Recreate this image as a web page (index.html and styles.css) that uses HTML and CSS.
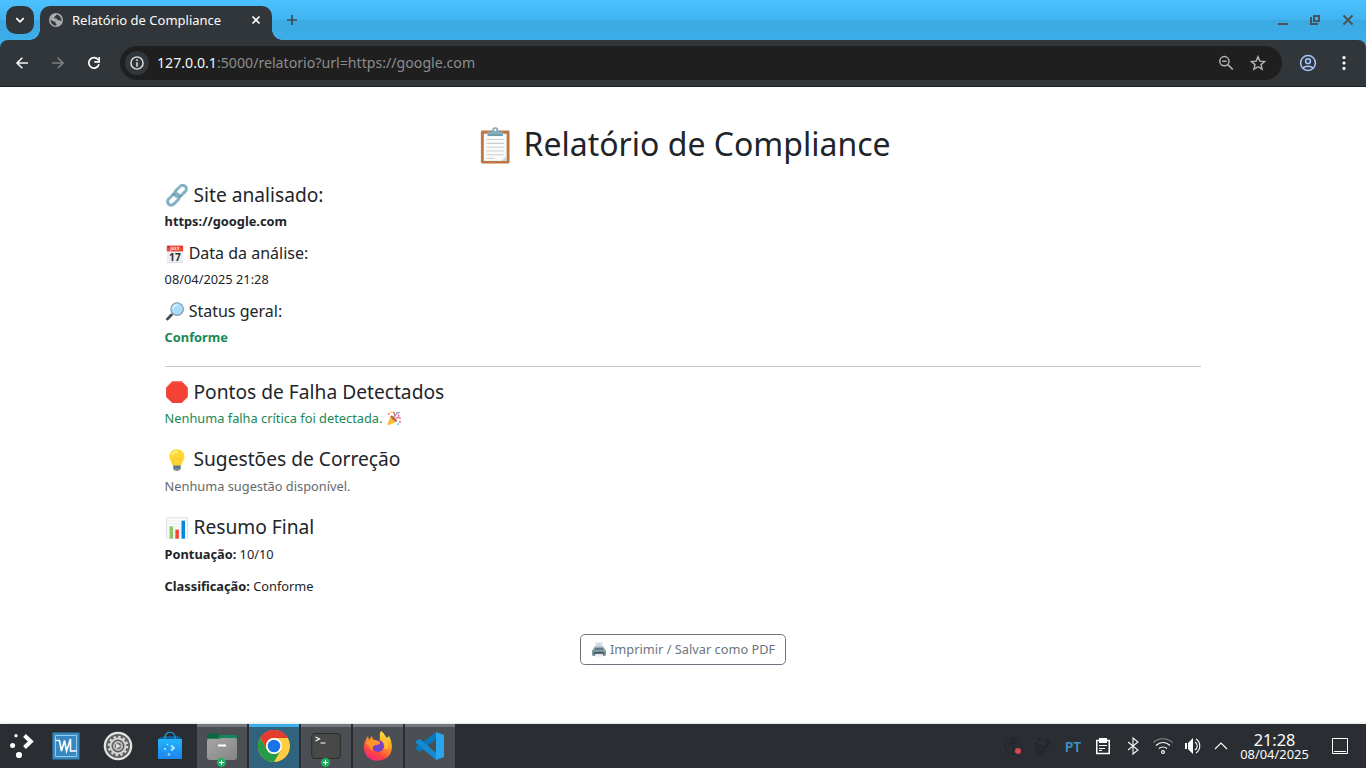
FILE: index.html
```html
<!DOCTYPE html>
<html lang="pt-BR">
<head>
<meta charset="utf-8">
<title>Relatório de Compliance</title>
<link rel="stylesheet" href="styles.css">
</head>
<body>
<div class="desktop">
  <header class="browser">
    <div class="tabstrip">
      <button class="tab-search"><svg width="12" height="12" viewBox="0 0 12 12"><path d="M2.300 4.200 6 7.800l3.700-3.600" fill="none" stroke="#fff" stroke-width="1.800"/></svg></button>
      <div class="tab">
        <svg class="favicon" width="14" height="14" viewBox="0 0 14 14"><circle cx="7" cy="7" r="7" fill="#a9acae"/><path d="M1.600 6.400 4 8.300l2.400.4.1 1.500 1.200 1.200-.5 1.200C3.800 12.400 1.500 10 1.600 6.400ZM7.500 1.400l-.7 1.700-1.700.8.3 1.400 2.300.2 1.100 1.700 1.800.1 1.800.9C12.700 5 10.700 2 7.500 1.400Z" fill="#31363b"/></svg>
        <span class="tab-title">Relatório de Compliance</span>
        <svg class="tab-close" width="10" height="10" viewBox="0 0 10 10"><path d="m1.500 1.500 7 7m0-7-7 7" stroke="#fff" stroke-width="1.700"/></svg>
      </div>
      <svg class="tab-new" width="12" height="12" viewBox="0 0 12 12"><path d="M6 1v10M1 6h10" stroke="#3b4a54" stroke-width="1.700"/></svg>
      <div class="window-buttons">
        <svg width="12" height="12" viewBox="0 0 12 12"><path d="M2 10h10" stroke="#4c5358" stroke-width="2"/></svg>
        <svg width="12" height="12" viewBox="0 0 12 12"><path d="M5 2h5v5H5zM2 3v7h7" fill="none" stroke="#4c5358" stroke-width="2"/></svg>
        <svg width="12" height="12" viewBox="0 0 12 12"><path d="m1.500 1.500 9 9m0-9-9 9" stroke="#4c5358" stroke-width="2"/></svg>
      </div>
    </div>
    <div class="toolbar">
      <svg class="nav-icon" width="16" height="16" viewBox="0 0 16 16"><path d="M14 8H3m5.300-5.300L3 8l5.300 5.300" fill="none" stroke="#f4f5f5" stroke-width="1.600"/></svg>
      <svg class="nav-icon" width="16" height="16" viewBox="0 0 16 16"><path d="M2 8h11M7.700 2.700 13 8l-5.300 5.300" fill="none" stroke="#7c8083" stroke-width="1.600"/></svg>
      <svg class="nav-icon" width="16" height="16" viewBox="0 0 16 16"><path d="M13 9.200A5.200 5.200 0 1 1 12.300 5" fill="none" stroke="#fff" stroke-width="1.700"/><path d="M13.200 2v4.900H8.300" fill="none" stroke="#fff" stroke-width="1.600"/></svg>
      <div class="omnibox">
        <span class="site-info"><svg width="14" height="14" viewBox="0 0 14 14"><circle cx="7" cy="7" r="6.100" fill="none" stroke="#e3e4e5" stroke-width="1.400"/><path d="M7 3.300v1.600M7 6.200v4.500" stroke="#e3e4e5" stroke-width="1.500"/></svg></span>
        <span class="url"><b>127.0.0.1</b>:5000/relatorio?url=https://google.com</span>
        <svg class="omni-icon" width="16" height="16" viewBox="0 0 16 16"><circle cx="6.400" cy="6.200" r="4.600" fill="none" stroke="#b2b4b5" stroke-width="1.500"/><path d="m9.800 9.600 5 4.900M4.200 6.200h4.400" stroke="#b2b4b5" stroke-width="1.600"/></svg>
        <svg class="omni-icon" width="16" height="16" viewBox="0 0 16 16"><path d="m8 1.700 1.800 4.400 4.800.4-3.600 3.100 1.100 4.600L8 11.700l-4.100 2.500L5 9.600 1.400 6.500l4.800-.4Z" fill="none" stroke="#b2b4b5" stroke-width="1.400"/></svg>
      </div>
      <svg class="profile" width="18" height="18" viewBox="0 0 18 18" fill="none" stroke="#a8c7fa" stroke-width="1.500"><circle cx="9" cy="9" r="7.400"/><circle cx="9" cy="7.200" r="2.400"/><path d="M3.700 13.900c2.700-2.300 7.900-2.300 10.600 0"/></svg>
      <svg class="kebab" width="4" height="16" viewBox="0 0 4 16" fill="#fff"><circle cx="2" cy="2.600" r="1.600"/><circle cx="2" cy="8" r="1.600"/><circle cx="2" cy="13.400" r="1.600"/></svg>
    </div>
  </header>

  <main class="page">
    <div class="container">
      <h1><svg class="emoji" viewBox="0 0 128 128"><rect x="16" y="12" width="98" height="113" rx="5" fill="#bd7743"/><path d="M26 23h78v93H26z" fill="#fafafa"/><path d="M87 116h17V99z" fill="#c8d3d8"/><path d="M35 43h60M35 56h60M35 69h60M35 82h60M35 95h60M35 107h27" stroke="#c7d0d5" stroke-width="3.500"/><path d="M39 16h13c3 0 3-5 3-8 2-9 18-9 20 0 0 3 0 8 3 8h13v14H39Z" fill="#82aebf"/><circle cx="65" cy="10" r="4" fill="#f5f8f9"/><path d="M39 28h52" stroke="#5f8fa2" stroke-width="4"/></svg> Relatório de Compliance</h1>
      <h4><svg class="emoji" viewBox="0 0 128 128" fill="none"><rect x="46" y="20" width="76" height="41" rx="20" transform="rotate(-45 84 40)" stroke="#82b1c1" stroke-width="17"/><rect x="6" y="67" width="76" height="41" rx="20" transform="rotate(-45 44 88)" stroke="#82b1c1" stroke-width="17"/><path d="m51 55-9 9m44 0-9 9" stroke="#5f90a4" stroke-width="10"/><path d="m73 21 10-9m-56 55-9 9" stroke="#b9d5df" stroke-width="5" stroke-linecap="round"/></svg> Site analisado:</h4>
      <p><strong>https://google.com</strong></p>
      <h5><svg class="emoji" viewBox="0 0 128 128"><path d="M8 42h112v82H8z" fill="#eceff1"/><path d="M8 4h112v40H8z" fill="#f5463b"/><path d="M12 121h104" stroke="#cfd8dc" stroke-width="5"/><circle cx="20" cy="12" r="6" fill="#a52a25"/><circle cx="108" cy="12" r="6" fill="#a52a25"/><text class="cal-month" x="64" y="36" text-anchor="middle">JULY</text><text class="cal-day" x="64" y="110" text-anchor="middle">17</text></svg> Data da análise:</h5>
      <p>08/04/2025 21:28</p>
      <h5><svg class="emoji" viewBox="0 0 128 128"><path d="m51 77-13 13" stroke="#90a4ae" stroke-width="12"/><path d="m39 89-27 28" stroke="#424b50" stroke-width="19" stroke-linecap="round"/><circle cx="79" cy="48" r="43" fill="#a9dcf8" stroke="#829ca8" stroke-width="8"/><path d="M50 45a28 28 0 0 1 30-23" fill="none" stroke="#e8f8ff" stroke-width="9" stroke-linecap="round"/></svg> Status geral:</h5>
      <p class="status"><strong>Conforme</strong></p>
      <hr>
      <h4 class="failures"><svg class="emoji" viewBox="0 0 128 128"><path d="M37 2h54l35 35v54l-35 35H37L2 91V37Z" fill="#f44336"/><path d="m5 38 33-33h52" fill="none" stroke="#ff7465" stroke-width="4"/></svg> Pontos de Falha Detectados</h4>
      <p class="success spaced">Nenhuma falha crítica foi detectada. <svg class="emoji" viewBox="0 0 128 128"><path d="M5 123 36 43c22 8 43 29 52 48Z" fill="#ffc42d"/><path d="m26 70 33 33m-44-8 20 20" stroke="#efab55" stroke-width="7"/><ellipse cx="62" cy="66" rx="36" ry="12" transform="rotate(43 62 66)" fill="#b9655b"/><path d="M61 59C77 41 69 16 55 7" fill="none" stroke="#f5645a" stroke-width="11"/><path d="M75 69c16-18 32-17 47-4" fill="none" stroke="#f27891" stroke-width="11"/><path d="M70 53c5-29 25-38 45-43" fill="none" stroke="#68b9e9" stroke-width="11"/><circle cx="20" cy="25" r="9" fill="#f58ba2"/><circle cx="37" cy="11" r="8" fill="#fbc76d"/><circle cx="115" cy="92" r="10" fill="#f58ba2"/><circle cx="103" cy="40" r="10" fill="#f58ba2"/><circle cx="101" cy="112" r="9" fill="#74c8ed"/><circle cx="89" cy="15" r="8" fill="#f58ba2"/></svg></p>
      <h4><svg class="emoji" viewBox="0 0 128 128"><path d="M64 2c-25 0-43 18-43 42 0 20 14 32 20 53h46c6-21 20-33 20-53C107 20 89 2 64 2Z" fill="#fdd835"/><path d="M37 30c6-12 18-16 28-14" fill="none" stroke="#fff59d" stroke-width="9" stroke-linecap="round"/><path d="m49 95-7-42 11 6 11-6 11 6 11-6-7 42" fill="none" stroke="#f9b52e" stroke-width="4"/><path d="M43 94h42v20c-6 15-36 15-42 0Z" fill="#79919d"/><path d="M43 99h42m-42 9h42" stroke="#455e69" stroke-width="4"/></svg> Sugestões de Correção</h4>
      <p class="muted spaced">Nenhuma sugestão disponível.</p>
      <h4><svg class="emoji" viewBox="0 0 128 128"><path d="M4 4h120v120H4z" fill="#fafcfd" stroke="#cfd8dc" stroke-width="4"/><path d="M5 22h118M5 39h118M5 56h118M5 73h118M5 90h118M5 107h118" stroke="#dce2e5" stroke-width="3"/><path d="M22 53h20v70H22z" fill="#8bc767"/><path d="M55 72h20v51H55z" fill="#f44336"/><path d="M90 21h20v102H90z" fill="#0387dc"/></svg> Resumo Final</h4>
      <p class="score"><strong>Pontuação:</strong> 10/10</p>
      <p><strong>Classificação:</strong> Conforme</p>
      <div class="actions">
        <button class="print"><svg class="emoji" viewBox="0 0 128 128"><path d="M36 2h56l7 56H29Z" fill="#dfe6e9"/><path d="M40 17h48m-49 12h50" stroke="#b5c2c8" stroke-width="4"/><path d="M27 39h74l22 35v35H5V74Z" fill="#9aadb6"/><path d="M5 73h118v36c0 6-5 10-11 10H16c-6 0-11-4-11-10Z" fill="#78909c"/><path d="M30 52h68l7 17H23Z" fill="#607884"/><path d="M23 88h82v18H23z" fill="#34444c"/><path d="M32 101h64l5 22H27Z" fill="#e6ecef"/><circle cx="110" cy="82" r="4" fill="#8bc34a"/></svg> Imprimir / Salvar como PDF</button>
      </div>
    </div>
  </main>

  <footer class="taskbar">
    <div class="launcher"><svg width="32" height="32" viewBox="0 0 32 32"><path d="m18.500 5.500 6.300 6-6.300 6" fill="none" stroke="#fff" stroke-width="4"/><circle cx="10" cy="5.700" r="1.600" fill="#fff"/><circle cx="6.600" cy="15.500" r="2.500" fill="#fff"/><circle cx="13" cy="25" r="3.100" fill="#fff"/></svg></div>
    <div class="launcher"><svg width="32" height="32" viewBox="0 0 32 32"><path d="M2.500 2.500h27v27h-27z" fill="#348bc5"/><path d="M5.500 5.500h21v21h-21z" fill="#3689c0" stroke="#9acbe8" stroke-width="1"/><path d="M5.500 10.500h4L11.500 21l3-10.500 2 10.500 4-12v12h6" fill="none" stroke="#fff" stroke-width="1.600"/></svg></div>
    <div class="launcher"><svg width="32" height="32" viewBox="0 0 32 32"><circle cx="16" cy="16" r="14.300" fill="#e2e2e1"/><circle cx="16" cy="16" r="12" fill="#5d5e5e"/><circle cx="16" cy="16" r="9.200" fill="none" stroke="#dededd" stroke-width="2.200" stroke-dasharray="2.300 2.517"/><circle cx="16" cy="16" r="7.500" fill="none" stroke="#d5d5d4" stroke-width="2"/><circle cx="16" cy="16" r="4" fill="none" stroke="#bbb" stroke-width="2"/><path d="m14 13 5 3-5 3z" fill="#ddd"/></svg></div>
    <div class="launcher"><svg width="32" height="32" viewBox="0 0 32 32"><defs><linearGradient id="bag" x2="0" y2="1"><stop stop-color="#23b4fb"/><stop offset="1" stop-color="#1e83ef"/></linearGradient></defs><path d="M5 8 10 6h14l3 2v4H5z" fill="#126096"/><path d="M4 9h24v20H4z" fill="url(#bag)"/><path d="M11 10V7.500c0-7 10-7 10 0V10" fill="none" stroke="#22a5e4" stroke-width="1.200"/><path d="m17 15.500 3 2.500-3 2.500" fill="none" stroke="#bce7ff" stroke-width="1.800"/><circle cx="13.500" cy="14.500" r=".8" fill="#bce7ff"/><circle cx="11" cy="19" r="1.100" fill="#bce7ff"/><circle cx="15" cy="24.500" r="1.400" fill="#8acefa"/></svg></div>
    <div class="task files"><svg width="32" height="32" viewBox="0 0 32 32"><defs><linearGradient id="folder" x2="1" y2="1"><stop stop-color="#a6a6a6"/><stop offset="1" stop-color="#858585"/></linearGradient></defs><path d="M1 5q0-2 2-2h8l2 2h16q2 0 2 2v8H1Z" fill="#126342"/><path d="M1 8h10l3-3h15q2 0 2 2v3H1Z" fill="#16855a"/><path d="M1 11q0-2 2-2h10l2-1h14q2 0 2 3v16q0 3-3 3H4q-3 0-3-3Z" fill="url(#folder)"/><path d="M12 15.500h8" stroke="#fff" stroke-width="2"/></svg><i class="plus"></i></div>
    <div class="task active"><svg width="32" height="32" viewBox="0 0 32 32"><circle cx="16" cy="16" r="16" fill="#ffcd40"/><path d="M2.140 8A16 16 0 0 1 29.860 8H16A8 8 0 0 0 9.070 20Z" fill="#e33b2e"/><path d="M2.140 8A16 16 0 0 0 16 32l6.930-12A8 8 0 0 1 9.070 20Z" fill="#259b46"/><circle cx="16" cy="16" r="8" fill="#fff"/><circle cx="16" cy="16" r="6.300" fill="#1a73e8"/></svg></div>
    <div class="task"><svg width="32" height="32" viewBox="0 0 32 32"><rect x="1.700" y="3.500" width="28.600" height="25" rx="3" fill="#484848" stroke="#292d2e"/><path d="m5.500 7 4 2-4 2m5 2h5" fill="none" stroke="#fff" stroke-width="1.200"/></svg><i class="plus"></i></div>
    <div class="task"><svg width="32" height="32" viewBox="0 0 32 32"><defs><linearGradient id="fox" x1=".8" x2=".3" y2="1"><stop stop-color="#fff44f"/><stop offset=".4" stop-color="#ff9a20"/><stop offset=".8" stop-color="#ff3c4a"/><stop offset="1" stop-color="#f32a80"/></linearGradient></defs><path d="M19 1c4 3 4 5 6 7l2-2c5 10 4 21-7 24C10 33 2 27 2 17c0-5 2-8 4-11l1 4 3-4 1 4 7 1c0-4-1-7 1-10Z" fill="url(#fox)"/><circle cx="16" cy="16" r="6" fill="#7942c5"/><path d="M4 13c4-6 8-3 12-2 3 1 3 3-1 4-4 0-5 2-4 6-4-2-4-6-7-8Z" fill="#ff942e"/><path d="M18 8c5 1 7 5 6 11" fill="none" stroke="#ffc52d" stroke-width="3"/></svg></div>
    <div class="task"><svg width="32" height="32" viewBox="0 0 32 32"><path d="M22 2v7L6 22l-4-3v-2Z" fill="#0878bd"/><path d="M2 13v-2l4-2 16 14v7Z" fill="#158bd1"/><path d="M22 2l8 3v22l-8 3Z" fill="#29a5ee"/></svg></div>
    <div class="tray">
      <svg width="20" height="20" viewBox="0 0 20 20"><circle cx="10" cy="10" r="8" fill="none" stroke="#23272b" stroke-width="1.300"/><path d="M10 15V5M6.500 8.500 10 5l3.500 3.500" fill="none" stroke="#23272b" stroke-width="2"/><circle cx="15" cy="15" r="3" fill="#da4453"/></svg>
      <svg width="20" height="20" viewBox="0 0 20 20"><path d="m12 3 4 4-4 4" fill="none" stroke="#23272b" stroke-width="2.500"/><circle cx="6" cy="3" r="1.400" fill="#23272b"/><circle cx="3" cy="8" r="1.600" fill="#23272b"/><circle cx="7" cy="14" r="4" fill="none" stroke="#23272b" stroke-width="2"/><path d="m4 12 5 4" stroke="#23272b" stroke-width="2"/></svg>
      <span class="layout">PT</span>
      <svg width="20" height="20" viewBox="0 0 20 20"><path d="M3.750 4.500h12.500v13H3.750z" fill="none" stroke="#fff" stroke-width="1.500"/><path d="M6 2h8v5H6zM6 9h8v1H6zm0 3h6v1H6zm0 2h3v1H6z" fill="#fff"/></svg>
      <svg width="20" height="20" viewBox="0 0 20 20"><path d="m5 6 10 8-5 4V2l5 4-10 8" fill="none" stroke="#f5f5f5" stroke-width="1.100"/></svg>
      <svg width="20" height="20" viewBox="0 0 20 20" fill="none" stroke-width="1.100"><path d="M.5 6.500c5-5 14-5 19 0" stroke="#85888a"/><path d="M3 9.500c4-4 10-4 14 0M6 12.500c2-2 6-2 8 0" stroke="#fff"/><circle cx="10" cy="16" r="1.400" stroke="#fff"/></svg>
      <svg width="20" height="20" viewBox="0 0 20 20"><path d="M2 7h2v6H2zm3 0 5-5v16l-5-5z" fill="#fff"/><path d="M12 6c3 2 3 6 0 8M13 3c5 3 5 11 0 14" fill="none" stroke="#fff" stroke-width="1.100"/></svg>
      <svg class="arrow" width="14" height="20" viewBox="0 0 14 20"><path d="m1 13 6-6 6 6" fill="none" stroke="#fff" stroke-width="1.100"/></svg>
      <div class="clock"><span class="time">21:28</span><span class="date">08/04/2025</span></div>
      <svg class="show-desktop" width="16" height="16" viewBox="0 0 16 16"><path d="M.5.500h15v15H.500zM2 13.500h12" fill="none" stroke="#fff"/></svg>
    </div>
  </footer>
</div>
</body>
</html>
```
FILE: styles.css
```css
* { box-sizing: border-box; }
body { margin: 0; font-family: "Noto Sans", sans-serif; font-size: 12.8px; line-height: 1.5; color: #212529; }
svg { display: block; flex: none; }
button { font: inherit; border: 0; padding: 0; }
.desktop { width: 1366px; height: 768px; display: flex; flex-direction: column; overflow: hidden; background: #fff; }

.browser { height: 87px; flex: none; background: linear-gradient(#4cc1ff 0, #40b4f0 20px, #3ba9e2 20px, #3daee9 42px, #3daee9 50px); }
.tabstrip { height: 40px; display: flex; align-items: center; }
.tab-search { width: 28px; height: 28px; margin-left: 6px; border-radius: 10px; background: #31363b; display: grid; place-items: center; }
.tab { position: relative; width: 232px; height: 34px; margin: 6px 0 0 6px; padding: 0 11px 6px 9px; border-radius: 10px 10px 0 0; background: #31363b; display: flex; align-items: center; color: #fcfcfc; }
.tab::before, .tab::after { content: ""; position: absolute; bottom: 0; width: 10px; height: 10px; }
.tab::before { left: -10px; background: radial-gradient(circle at 0 0, transparent 9.5px, #31363b 10px); }
.tab::after { right: -10px; background: radial-gradient(circle at 100% 0, transparent 9.5px, #31363b 10px); }
.tab-title { flex: 1; margin-left: 9px; padding-top: 1px; font-size: 13px; white-space: nowrap; }
.tab-new { margin-left: 14px; }
.window-buttons { margin-left: auto; margin-right: 12px; display: flex; gap: 21px; }
.toolbar { height: 47px; background: #31363b; border-radius: 8px 8px 0 0; border-bottom: 1px solid #1f2326; display: flex; align-items: center; padding-left: 14px; }
.nav-icon { margin-right: 20px; }
.omnibox { width: 1162px; height: 34px; margin-left: -2px; border-radius: 17px; background: #1f1f1f; display: flex; align-items: center; padding: 0 16px 0 5px; }
.site-info { width: 24px; height: 24px; border-radius: 12px; background: #31363b; display: grid; place-items: center; }
.url { flex: 1; margin-left: 8px; padding-bottom: 1px; font-size: 14.17px; color: #8b8d8e; }
.url b { font-weight: 400; color: #f4f4f4; }
.omni-icon { margin-left: 16px; }
.profile { margin-left: 17px; }
.kebab { margin-left: 25px; }

.page { flex: 1; padding-top: 38.2px; }
.container { width: 1056px; margin: 0 auto; padding: 0 9.6px; }
h1, h4, h5 { margin: 0 0 6.4px; line-height: 1.2; font-weight: 400; }
h1 { font-size: 32px; margin-bottom: 19.2px; text-align: center; }
h4 { font-size: 19.2px; }
h5 { font-size: 16px; }
p { margin: 0 0 12.8px; }
hr { margin: 0 0 13.1px; border: 0; border-top: 1px solid #c7c8c9; }
.failures { margin-bottom: 6.1px; }
.score { margin-bottom: 13px; }
.spaced { margin-bottom: 19.2px; }
.status { padding-top: .3px; margin-bottom: 18.9px; }
.status, .success { color: #198754; }
.muted { color: #65696d; }
.emoji { display: inline-block; width: 1.245em; height: 1.17em; vertical-align: -.11em; margin: -.15em 0; }
.cal-month { font: bold 27px "Noto Sans", sans-serif; fill: #fff; }
.cal-day { font: bold 70px "Noto Sans", sans-serif; fill: #2f2f2f; }
.actions { margin-top: 38.2px; text-align: center; }
.print { height: 30.8px; padding: 4.8px 9.6px; border: 1px solid #6c757d; border-radius: 4.8px; background: #fff; color: #6c757d; line-height: 19.2px; }

.taskbar { height: 44px; flex: none; display: flex; background: #2a2e32; box-shadow: 0 -1px 2px #e4e4e4; padding-left: 6px; }
.launcher { width: 32px; margin-right: 20px; display: grid; place-items: center; }
.launcher:first-child { margin-right: 12px; }
.launcher:nth-child(4) { margin-right: 11px; }
.task { position: relative; width: 50px; margin-right: 2px; border-top: 3px solid #75787a; background: #4b4e52; display: flex; justify-content: center; padding-top: 3px; }
.task.active { border-color: #3daee9; background: #31637f; }
.plus { position: absolute; left: 20px; bottom: 1px; width: 9px; height: 9px; border-radius: 5px; background: linear-gradient(#fff, #fff) center/5px 1px no-repeat, linear-gradient(#fff, #fff) center/1px 5px no-repeat, #21b161; }
.tray { margin-left: auto; display: flex; align-items: center; gap: 10px; color: #fcfcfc; }
.layout { width: 20px; text-align: center; font-size: 14px; font-weight: 600; color: #3b91c8; }
.arrow { margin-left: 1px; }
.clock { display: flex; flex-direction: column; align-items: center; width: 73px; margin-right: -1px; padding-top: 2px; white-space: nowrap; }
.time { font-size: 16.3px; line-height: 15px; }
.date { font-size: 12.9px; line-height: 13px; }
.show-desktop { margin: 0 18px 0 12px; }
```
